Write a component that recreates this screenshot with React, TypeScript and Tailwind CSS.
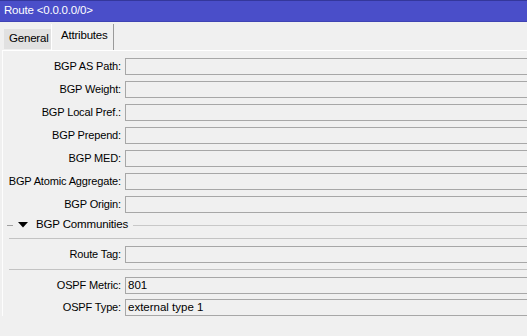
import React from "react";

const bgpFields = [
  "BGP AS Path:",
  "BGP Weight:",
  "BGP Local Pref.:",
  "BGP Prepend:",
  "BGP MED:",
  "BGP Atomic Aggregate:",
  "BGP Origin:",
];

const Field = ({ label, value = "" }: { label: string; value?: string }) => (
  <div className="flex items-center h-[17px]">
    <div className="w-[122px] shrink-0 text-right pr-[4px] whitespace-nowrap text-[11px] tracking-[-0.15px]">{label}</div>
    <div className="flex-1 h-[17px] border border-[#a7a7a7] border-r-0 bg-[#f0f0f0] pl-[2px] leading-[15px] whitespace-nowrap">
      {value}
    </div>
  </div>
);

export default function App() {
  return (
    <div className="w-[527px] h-[336px] overflow-hidden bg-[#f0f0f0] text-black text-[11.5px] font-['Liberation_Sans',Arial,sans-serif]">
      {/* Title bar */}
      <div className="h-[22px] border-t border-[#34379b] border-b border-b-[#3f43b4] bg-[#4a4ec9] text-white pl-[4px] flex items-center tracking-[-0.2px]">
        Route &lt;0.0.0.0/0&gt;
      </div>

      {/* Tabs */}
      <div className="h-[28px] flex items-end pl-[4px]">
        <div className="h-[20px] mb-[1px] w-[47px] bg-[#e1e1e1] flex items-center pl-[5px] tracking-[-0.2px]">
          General
        </div>
        <div className="h-[26px] w-[63px] border-l border-white border-r border-r-[#9a9a9a] bg-[#f0f0f0] flex items-center pl-[9px] pb-[2px] tracking-[-0.2px]">
          Attributes
        </div>
      </div>

      {/* Panel */}
      <div className="ml-[2px] border-t border-white border-l border-l-[#fdfdfd] pt-[7px] flex flex-col">
        <div className="flex flex-col gap-[6px]">
          {bgpFields.map((f) => (
            <Field key={f} label={f} />
          ))}
        </div>

        {/* BGP Communities */}
        <div className="flex items-center h-[12px] mt-[6px]">
          <div className="ml-[4px] w-[6px] h-px bg-[#a0a0a0]" />
          <svg width="10" height="6" viewBox="0 0 10 6" className="ml-[5px]">
            <path d="M0 0 H10 L5 5.5 Z" fill="#000" />
          </svg>
          <span className="ml-[8px] tracking-[-0.15px]">BGP Communities</span>
          <div className="flex-1 ml-[5px] h-px bg-[#c8c8c8]" />
        </div>

        <div className="ml-[6px] mt-[7px] h-px bg-[#c3c3c3]" />
        <div className="mt-[7px]">
          <Field label="Route Tag:" />
        </div>
        <div className="ml-[6px] mt-[6px] h-px bg-[#c3c3c3]" />
        <div className="mt-[7px] flex flex-col gap-[5px]">
          <Field label="OSPF Metric:" value="801" />
          <Field label="OSPF Type:" value="external type 1" />
        </div>
      </div>
    </div>
  );
}
